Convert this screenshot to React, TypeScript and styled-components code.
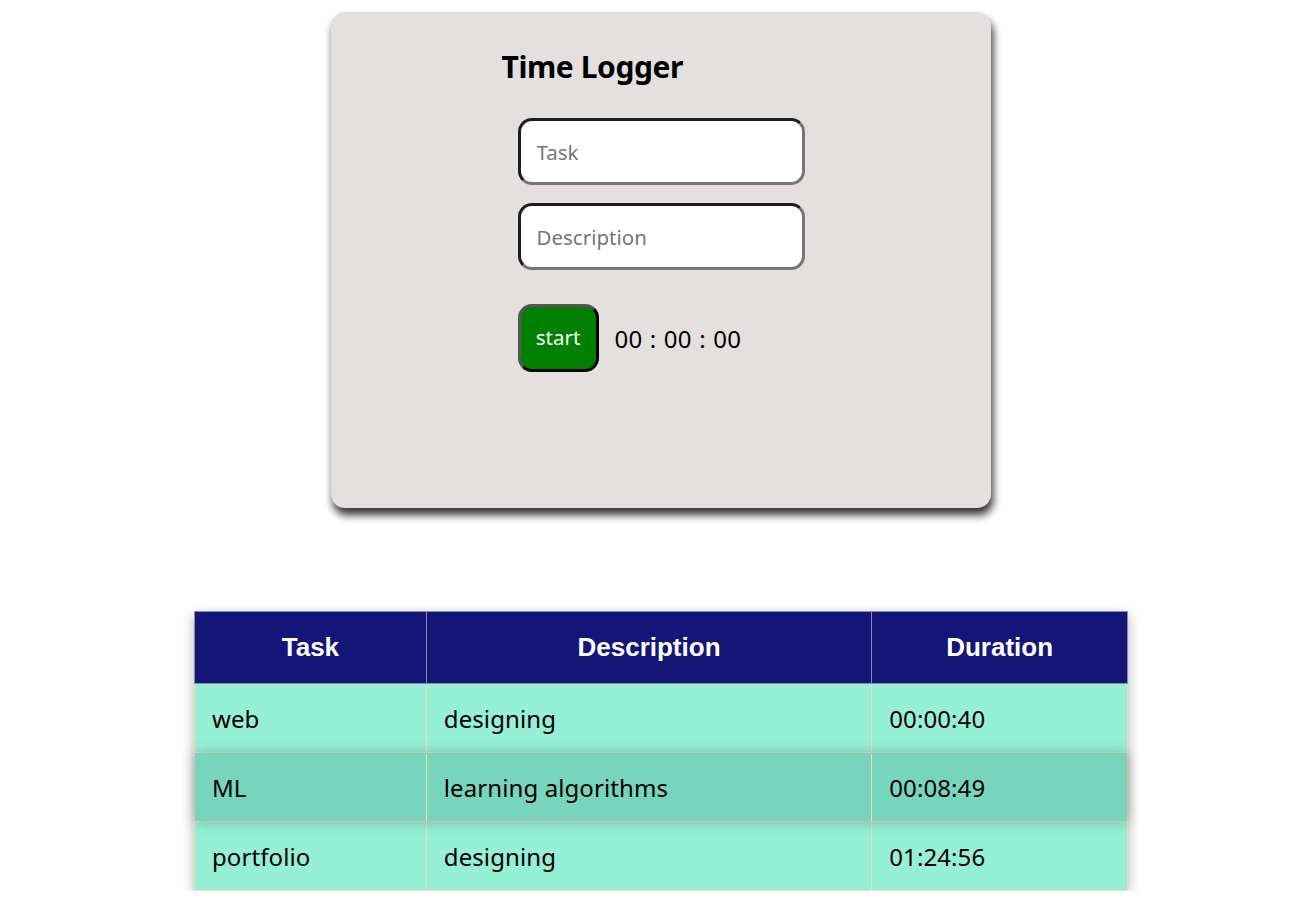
import React from "react";
import styled, { createGlobalStyle } from "styled-components";

const Global = createGlobalStyle`
  html, body { margin: 0; padding: 0; background: #ffffff; }
  body { font-family: "Noto Sans", "Open Sans", sans-serif; color: #000; }
`;

const Page = styled.div`
  display: flex;
  flex-direction: column;
  align-items: center;
  padding: 12px 0 0 8px;
`;

const Card = styled.section`
  width: 660px;
  height: 496px;
  box-sizing: border-box;
  background: #e3e0df;
  border-radius: 14px;
  box-shadow: 2px 7px 8px rgba(0, 0, 0, 0.8);
  display: flex;
  justify-content: center;
  padding-top: 35px;
`;

const Form = styled.div`
  width: 287px;
  display: flex;
  flex-direction: column;
`;

const Title = styled.h1`
  margin: 0 0 31px -16px;
  font-size: 30px;
  line-height: 40px;
  font-weight: 700;
  letter-spacing: -0.4px;
`;

const Input = styled.input`
  width: 287px;
  height: 67px;
  box-sizing: border-box;
  border: 3px solid #767676;
  border-top-color: #1e1e1e;
  border-left-color: #1e1e1e;
  border-radius: 14px;
  background: #fff;
  padding: 0 16px;
  font-family: "Noto Sans", "Open Sans", sans-serif;
  font-size: 20.5px;
  margin-bottom: 18px;
  outline: none;
  &::placeholder { color: #767676; }
`;

const Controls = styled.div`
  display: flex;
  align-items: center;
  gap: 16px;
  margin-top: 16px;
`;

const StartButton = styled.button`
  width: 81px;
  height: 68px;
  box-sizing: border-box;
  background: #008000;
  color: #fff;
  border: 3px solid #000;
  border-top-color: #555;
  border-left-color: #555;
  border-radius: 14px;
  font-family: "Noto Sans", "Open Sans", sans-serif;
  font-size: 20.5px;
  padding: 0 0 2px;
`;

const Timer = styled.span`
  font-size: 24px;
  word-spacing: 1px;
  letter-spacing: 0.2px;
`;

const Table = styled.table`
  margin-top: 103px;
  width: 934px;
  border-collapse: collapse;
  box-shadow: 0 4px 12px rgba(0, 0, 0, 0.3);
`;

const HeadCell = styled.th<{ $w: number }>`
  width: ${(p) => p.$w}px;
  height: 72px;
  box-sizing: border-box;
  background: #151577;
  color: #fff;
  font-family: "Liberation Sans", Arial, sans-serif;
  font-size: 26px;
  font-weight: 700;
  text-align: center;
  border: 1px solid #8a8aa8;
  padding: 0;
`;

const Row = styled.tr<{ $active?: boolean }>`
  height: 69px;
  background: ${(p) => (p.$active ? "#77d5bd" : "#96f0d6")};
  ${(p) => (p.$active ? "box-shadow: 0 0 12px rgba(0,0,0,0.25); position: relative;" : "")}
`;

const Cell = styled.td`
  border: 1px solid #f0dfb0;
  padding: 0 0 0 17px;
  font-size: 24px;
  letter-spacing: 0.1px;
`;

const rows = [
  { task: "web", desc: "designing", dur: "00:00:40" },
  { task: "ML", desc: "learning algorithms", dur: "00:08:49", active: true },
  { task: "portfolio", desc: "designing", dur: "01:24:56" },
];

export default function App() {
  return (
    <>
      <Global />
      <Page>
        <Card>
          <Form>
            <Title>Time Logger</Title>
            <Input placeholder="Task" />
            <Input placeholder="Description" />
            <Controls>
              <StartButton>start</StartButton>
              <Timer>00 : 00 : 00</Timer>
            </Controls>
          </Form>
        </Card>
        <Table>
          <thead>
            <tr>
              <HeadCell $w={232}>Task</HeadCell>
              <HeadCell $w={446}>Description</HeadCell>
              <HeadCell $w={256}>Duration</HeadCell>
            </tr>
          </thead>
          <tbody>
            {rows.map((r) => (
              <Row key={r.task} $active={r.active}>
                <Cell>{r.task}</Cell>
                <Cell>{r.desc}</Cell>
                <Cell>{r.dur}</Cell>
              </Row>
            ))}
          </tbody>
        </Table>
      </Page>
    </>
  );
}
